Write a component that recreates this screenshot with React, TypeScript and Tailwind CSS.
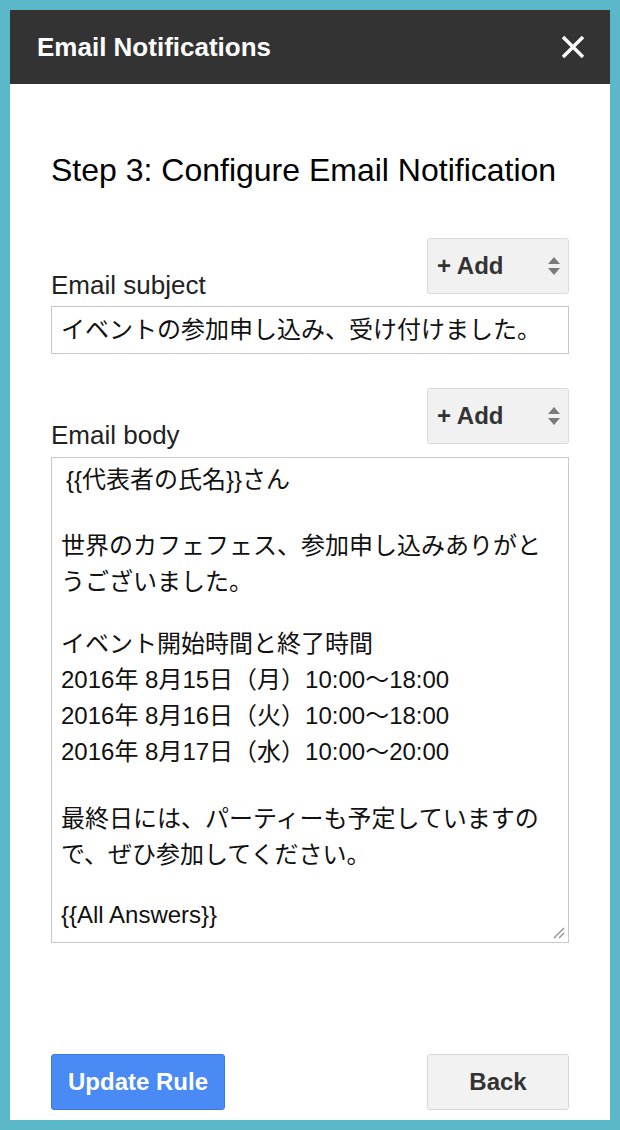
const font = "font-['Liberation_Sans','Noto_Sans_CJK_JP',sans-serif]";

function AddSelect() {
  return (
    <div className="w-[142px] h-[56px] mb-[6px] flex items-center justify-between pl-[9px] pr-[7px] bg-[#f1f1f1] border border-[#dadada] rounded-[3px]">
      <span className="text-[24px] font-bold text-[#333]">+ Add</span>
      <svg width="14" height="22" viewBox="0 0 14 22">
        <polygon points="7,2 13,9 1,9" fill="#7a7a7a" />
        <polygon points="1,13 13,13 7,20" fill="#7a7a7a" />
      </svg>
    </div>
  )
}

export default function App() {
  return (
    <div className={`w-[620px] h-[1130px] bg-[#5ab8c8] p-[10px] ${font}`}>
      <div className="h-full bg-white flex flex-col">
        <div className="h-[74px] shrink-0 bg-[#333333] flex items-center justify-between pl-[27px] pr-[25px]">
          <h1 className="text-[26px] font-bold text-white">Email Notifications</h1>
          <svg width="24" height="24" viewBox="0 0 24 24">
            <path d="M2 2 L22 22 M22 2 L2 22" stroke="#fff" strokeWidth="3.4" />
          </svg>
        </div>

        <div className="flex-1 flex flex-col px-[41px] pb-[10px]">
          <h2 className="mt-[67px] text-[32px] leading-[38px] text-black">Step 3: Configure Email Notification</h2>

          <div className="mt-[49px] flex items-end justify-between">
            <label className="text-[26px] leading-[30px] text-[#222]">Email subject</label>
            <AddSelect />
          </div>
          <div className="mt-[6px] h-[48px] flex items-center px-[9px] border border-[#c8c8c8] text-[24px] text-[#111]">
            イベントの参加申し込み、受け付けました。
          </div>

          <div className="mt-[34px] flex items-end justify-between">
            <label className="text-[26px] leading-[30px] text-[#222]">Email body</label>
            <AddSelect />
          </div>
          <div className="relative mt-[7px] h-[486px] border border-[#c8c8c8] pt-[4px] px-[9px] text-[24px] leading-[36px] text-[#111]">
            <div className="ml-[5px]">{'{{代表者の氏名}}さん'}</div>
            <div className="h-[30px]" />
            <div>世界のカフェフェス、参加申し込みありがと</div>
            <div>うございました。</div>
            <div className="h-[26px]" />
            <div>イベント開始時間と終了時間</div>
            <div>2016年 8月15日（月）10:00〜18:00</div>
            <div>2016年 8月16日（火）10:00〜18:00</div>
            <div>2016年 8月17日（水）10:00〜20:00</div>
            <div className="h-[31px]" />
            <div>最終日には、パーティーも予定していますの</div>
            <div>で、ぜひ参加してください。</div>
            <div className="h-[24px]" />
            <div>{'{{All Answers}}'}</div>
            <svg className="absolute right-[3px] bottom-[3px]" width="12" height="12" viewBox="0 0 12 12">
              <path d="M1 11 L11 1 M6 11 L11 6" stroke="#8a8a8a" strokeWidth="1.2" />
            </svg>
          </div>

          <div className="mt-auto flex items-center justify-between">
            <button className="w-[174px] h-[56px] bg-[#4a8af4] border border-[#3a7ae6] rounded-[3px] text-[24px] font-bold text-white">
              Update Rule
            </button>
            <button className="w-[142px] h-[56px] bg-[#f2f2f2] border border-[#d6d6d6] rounded-[3px] text-[24px] font-bold text-[#333]">
              Back
            </button>
          </div>
        </div>
      </div>
    </div>
  )
}
